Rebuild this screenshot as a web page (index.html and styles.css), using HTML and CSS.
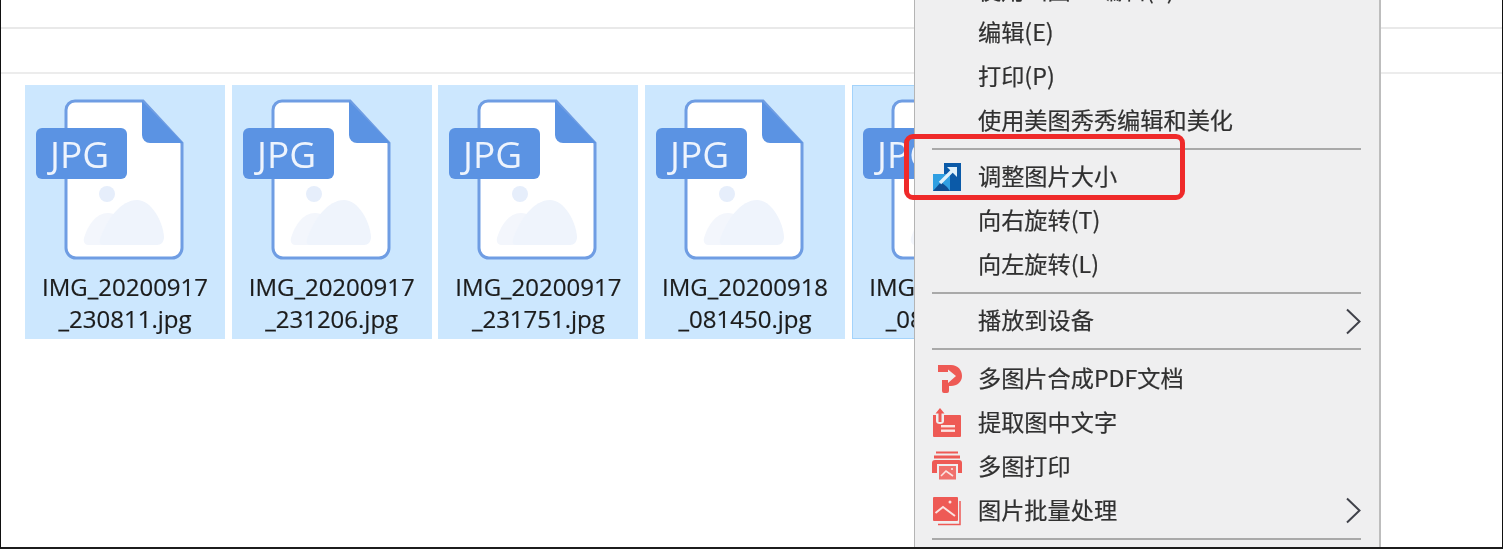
FILE: index.html
```html
<!DOCTYPE html>
<html lang="zh-CN">
<head>
<meta charset="utf-8">
<title>图片文件右键菜单</title>
<link rel="stylesheet" href="styles.css">
</head>
<body>
<svg class="defs" width="0" height="0" aria-hidden="true">
  <symbol id="file" viewBox="0 0 200 186">
    <path class="page" d="M50 16H118L157 58V163a10 10 0 0 1-10 10H51a10 10 0 0 1-10-10V25a9 9 0 0 1 9-9Z"/>
    <circle class="pic-sun" cx="82" cy="109" r="8"/>
    <path class="pic-back" d="M63 160c-3 0-5-3-4-7 4-13 12-25 24-25 7 0 13 4 16 9v23Z"/>
    <path class="pic-front" d="M78 160c-3 0-4-3-3-6 7-20 21-39 37-39 14 0 26 21 27 37 0 5-3 8-7 8Z"/>
    <path class="fold" d="M117 16 158 58H125a8 8 0 0 1-8-8Z"/>
    <rect class="tag" x="11" y="43" width="91" height="51" rx="6"/>
  </symbol>
</svg>

<main class="window">
  <div class="bar bar-top"></div>
  <div class="bar bar-sub"></div>

  <section class="files">
    <article class="tile">
      <svg class="file-icon" viewBox="0 0 200 186"><use href="#file"/><text class="tag-text" x="25" y="83">JPG</text></svg>
      <p class="name">IMG_20200917<br>_230811.jpg</p>
    </article>
    <article class="tile">
      <svg class="file-icon" viewBox="0 0 200 186"><use href="#file"/><text class="tag-text" x="25" y="83">JPG</text></svg>
      <p class="name">IMG_20200917<br>_231206.jpg</p>
    </article>
    <article class="tile">
      <svg class="file-icon" viewBox="0 0 200 186"><use href="#file"/><text class="tag-text" x="25" y="83">JPG</text></svg>
      <p class="name">IMG_20200917<br>_231751.jpg</p>
    </article>
    <article class="tile">
      <svg class="file-icon" viewBox="0 0 200 186"><use href="#file"/><text class="tag-text" x="25" y="83">JPG</text></svg>
      <p class="name">IMG_20200918<br>_081450.jpg</p>
    </article>
    <article class="tile tile-focus">
      <svg class="file-icon" viewBox="0 0 200 186"><use href="#file"/><text class="tag-text" x="25" y="83">JPG</text></svg>
      <p class="name">IMG_20200918<br>_082133.jpg</p>
    </article>
  </section>

  <nav class="menu">
    <div class="menu-list">
      <div class="row row-clipped"><span class="ico"></span><span class="label">使用画图3D编辑(3)</span></div>
      <div class="row"><span class="ico"></span><span class="label">编辑(E)</span></div>
      <div class="row"><span class="ico"></span><span class="label">打印(P)</span></div>
      <div class="row"><span class="ico"></span><span class="label">使用美图秀秀编辑和美化</span></div>
      <div class="sep"></div>
      <div class="row"><span class="ico">
        <svg viewBox="0 0 28 28" width="28" height="28">
          <rect x="11" y="0" width="17" height="28" fill="#0b5aa8"/>
          <rect x="0" y="11" width="17" height="17" fill="#2f9fe2"/>
          <path d="M0 28 8 19l6 5 3 4Z" fill="#0f4f94"/>
          <path d="M7 20 19 8" stroke="#dff1fb" stroke-width="3.4" fill="none"/>
          <path d="M14 4H24V14Z" fill="#dff1fb"/>
        </svg>
      </span><span class="label">调整图片大小</span></div>
      <div class="row"><span class="ico"></span><span class="label">向右旋转(T)</span></div>
      <div class="row"><span class="ico"></span><span class="label">向左旋转(L)</span></div>
      <div class="sep"></div>
      <div class="row"><span class="ico"></span><span class="label">播放到设备</span>
        <svg class="chev" viewBox="0 0 16 27" width="16" height="27"><path d="M2 1.500 14.500 13.500 2 25.500"/></svg>
      </div>
      <div class="sep sep-tall"></div>
      <div class="row"><span class="ico">
        <svg viewBox="-6 0 30 28" width="30" height="28">
          <path class="red" d="M0 0H13C20 0 24 5 24 11S19 21 13 21H11V26Q11 28 9 28H6Q4 28 4 26V15H10V18L18 11 10 4.500V7H0Z"/>
        </svg>
      </span><span class="label">多图片合成PDF文档</span></div>
      <div class="row"><span class="ico">
        <svg viewBox="0 0 28 30" width="28" height="30">
          <path class="red" d="M0 7H3V13Q3 16 7 16T11 13V7H27a1 1 0 0 1 1 1V28a1 1 0 0 1-1 1H1a1 1 0 0 1-1-1Z"/>
          <path class="red" d="M7 0 11.500 5.500H8.500V14H5.500V5.500H2.500Z"/>
          <rect x="8" y="17" width="14" height="2.400" fill="#fbe3e1"/>
          <rect x="8" y="21.500" width="14" height="2.400" fill="#fbe3e1"/>
        </svg>
      </span><span class="label">提取图中文字</span></div>
      <div class="row"><span class="ico">
        <svg viewBox="0 0 30 31" width="30" height="31">
          <rect class="red" x="4" y="0.500" width="22" height="2"/>
          <rect class="red" x="2" y="4.500" width="26" height="3"/>
          <path class="red" d="M3 9H27Q30 9 30 12V22H0V12Q0 9 3 9Z"/>
          <rect x="6" y="14" width="19" height="15.500" fill="#f0716c" stroke="#efeff0" stroke-width="2"/>
          <path d="M9 25 14 20 21 25" stroke="#fbe3e1" stroke-width="1.600" fill="none"/>
          <circle cx="20" cy="18" r="1.100" fill="#fbe3e1"/>
        </svg>
      </span><span class="label">多图打印</span></div>
      <div class="row"><span class="ico">
        <svg viewBox="0 0 28 30" width="28" height="30">
          <rect class="red" x="0" y="1" width="25" height="24" rx="1"/>
          <path d="M27 5V28.500H5" stroke="#ee5a55" stroke-width="1.500" fill="none"/>
          <path d="M2.500 17 10 11 22 20" stroke="#fbe3e1" stroke-width="2" fill="none"/>
          <circle cx="17" cy="6" r="1.500" fill="#fbe3e1"/>
        </svg>
      </span><span class="label">图片批量处理</span>
        <svg class="chev" viewBox="0 0 16 27" width="16" height="27"><path d="M2 1.500 14.500 13.500 2 25.500"/></svg>
      </div>
      <div class="sep"></div>
    </div>
  </nav>

  <div class="callout"></div>
</main>
</body>
</html>
```
FILE: styles.css
```css
* { box-sizing: border-box; }

html, body {
  margin: 0;
  padding: 0;
  height: 100%;
  overflow: hidden;
  background: #fff;
}

.defs { position: absolute; }

.window {
  position: relative;
  width: 1503px;
  height: 549px;
  overflow: hidden;
  background: #fff;
  border-left: 1px solid #111;
  border-right: 1px solid #111;
  border-bottom: 2px solid #1c1c1c;
  font-family: "Open Sans", "Noto Sans CJK SC", sans-serif;
  filter: blur(0.6px);
}

.bar-top {
  height: 29px;
  border-bottom: 2px solid #e9e9e9;
}

.bar-sub {
  height: 45px;
  border-bottom: 2px solid #ececec;
}

.files {
  display: flex;
  gap: 6.7px;
  padding: 11px 0 0 24px;
}

.tile {
  flex: 0 0 200px;
  height: 254px;
  background: #cce7fe;
}

.tile-focus {
  border: 1px solid #a3d3fb;
}

.tile-focus .file-icon { margin: -1px 0 0 -1px; }

.file-icon {
  display: block;
  width: 200px;
  height: 186px;
}

.page {
  fill: #fff;
  stroke: #6f9de3;
  stroke-width: 3;
}

.fold, .tag { fill: #5b93e3; }
.pic-sun { fill: #e6eefb; }
.pic-back { fill: #f3f6fc; }
.pic-front { fill: #eff4fc; }

.tag-text {
  fill: #eef4fd;
  font-family: "Open Sans", sans-serif;
  font-size: 37px;
}

.name {
  margin: 0;
  font-size: 24px;
  line-height: 32px;
  color: #1c1c1c;
  text-align: center;
  white-space: nowrap;
  -webkit-text-stroke: 0.2px #1c1c1c;
}

.menu {
  position: absolute;
  top: 0;
  bottom: 0;
  left: 913px;
  width: 467px;
  overflow: hidden;
  background: #efeff0;
  border-left: 1px solid #b4b4b4;
  border-right: 2px solid #bdbdbd;
}

.menu-list {
  margin-top: -33px;
  font-family: "Noto Sans CJK SC", sans-serif;
  font-size: 23.2px;
  color: #303030;
  -webkit-text-stroke: 0.2px #303030;
}

.row {
  display: flex;
  align-items: center;
  height: 44px;
  padding: 0 18px 0 17px;
}

.ico {
  display: flex;
  align-items: center;
  justify-content: center;
  flex: 0 0 30px;
  height: 32px;
  margin-right: 16px;
}

.label {
  flex: 1;
  padding-bottom: 4px;
  white-space: nowrap;
}

.row-clipped .label { padding-bottom: 0; }

.chev { flex: none; }

.chev path {
  fill: none;
  stroke: #40424a;
  stroke-width: 2;
}

.red { fill: #ee5a55; }

.sep {
  height: 12px;
  margin: 0 18px 0 17px;
  padding-top: 5px;
}

.sep-tall { height: 13.5px; }

.sep::before {
  content: "";
  display: block;
  height: 2px;
  background: #a9a9a9;
}

.callout {
  position: absolute;
  left: 903px;
  top: 134px;
  width: 281px;
  height: 66px;
  border: 5px solid #ef2a2a;
  border-radius: 9px;
}
```
